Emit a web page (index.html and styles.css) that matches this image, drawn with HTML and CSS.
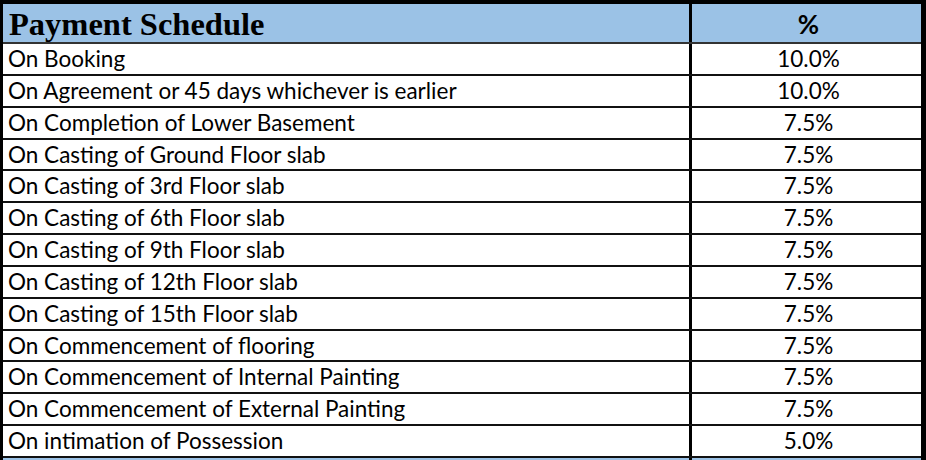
FILE: index.html
```html
<!DOCTYPE html>
<html>
<head>
<meta charset="utf-8">
<link rel="stylesheet" href="styles.css">
</head>
<body>
<div class="sheet">
  <div class="row head">
    <div class="label">Payment Schedule</div>
    <div class="pct">%</div>
  </div>
  <div class="row"><div class="label">On Booking</div><div class="pct">10.0%</div></div>
  <div class="row"><div class="label">On Agreement or 45 days whichever is earlier</div><div class="pct">10.0%</div></div>
  <div class="row"><div class="label">On Completion of Lower Basement</div><div class="pct">7.5%</div></div>
  <div class="row"><div class="label">On Casting of Ground Floor slab</div><div class="pct">7.5%</div></div>
  <div class="row"><div class="label">On Casting of 3rd Floor slab</div><div class="pct">7.5%</div></div>
  <div class="row"><div class="label">On Casting of 6th Floor slab</div><div class="pct">7.5%</div></div>
  <div class="row"><div class="label">On Casting of 9th Floor slab</div><div class="pct">7.5%</div></div>
  <div class="row"><div class="label">On Casting of 12th Floor slab</div><div class="pct">7.5%</div></div>
  <div class="row"><div class="label">On Casting of 15th Floor slab</div><div class="pct">7.5%</div></div>
  <div class="row"><div class="label">On Commencement of flooring</div><div class="pct">7.5%</div></div>
  <div class="row"><div class="label">On Commencement of Internal Painting</div><div class="pct">7.5%</div></div>
  <div class="row"><div class="label">On Commencement of External Painting</div><div class="pct">7.5%</div></div>
  <div class="row"><div class="label">On intimation of Possession</div><div class="pct">5.0%</div></div>
  <div class="row tail"><div class="label"></div><div class="pct"></div></div>
</div>
</body>
</html>
```
FILE: styles.css
```css
html, body {
  margin: 0;
  padding: 0;
  background: #fff;
  overflow: hidden;
}
.sheet {
  width: 926px;
  height: 460px;
  overflow: hidden;
  box-sizing: border-box;
  border-top: 4px solid #000;
  border-left: 3px solid #000;
  border-right: 5px solid #000;
  font-family: Lato, "Open Sans", sans-serif;
  color: #000;
}
.row {
  display: flex;
  flex-shrink: 0;
  height: 31.85px;
  box-sizing: border-box;
  border-bottom: 2px solid #111;
  font-size: 22.5px;
  line-height: 30px;
}
.label {
  width: 689px;
  box-sizing: border-box;
  border-right: 3px solid #000;
  padding-left: 5px;
  white-space: nowrap;
}
.pct {
  flex: 1;
  text-align: center;
  padding-left: 4px;
}
.head {
  height: 40px;
  background: #9bc2e6;
  border-bottom: 2px solid #333;
  line-height: 40px;
}
.head .label {
  font-family: "Liberation Serif", "DejaVu Serif", serif;
  font-weight: bold;
  font-size: 32.5px;
  padding-left: 6px;
}
.head .pct {
  font-weight: bold;
  font-size: 26px;
  padding-left: 4px;
}
.tail {
  background: #9bc2e6;
  border-bottom: none;
}
```
